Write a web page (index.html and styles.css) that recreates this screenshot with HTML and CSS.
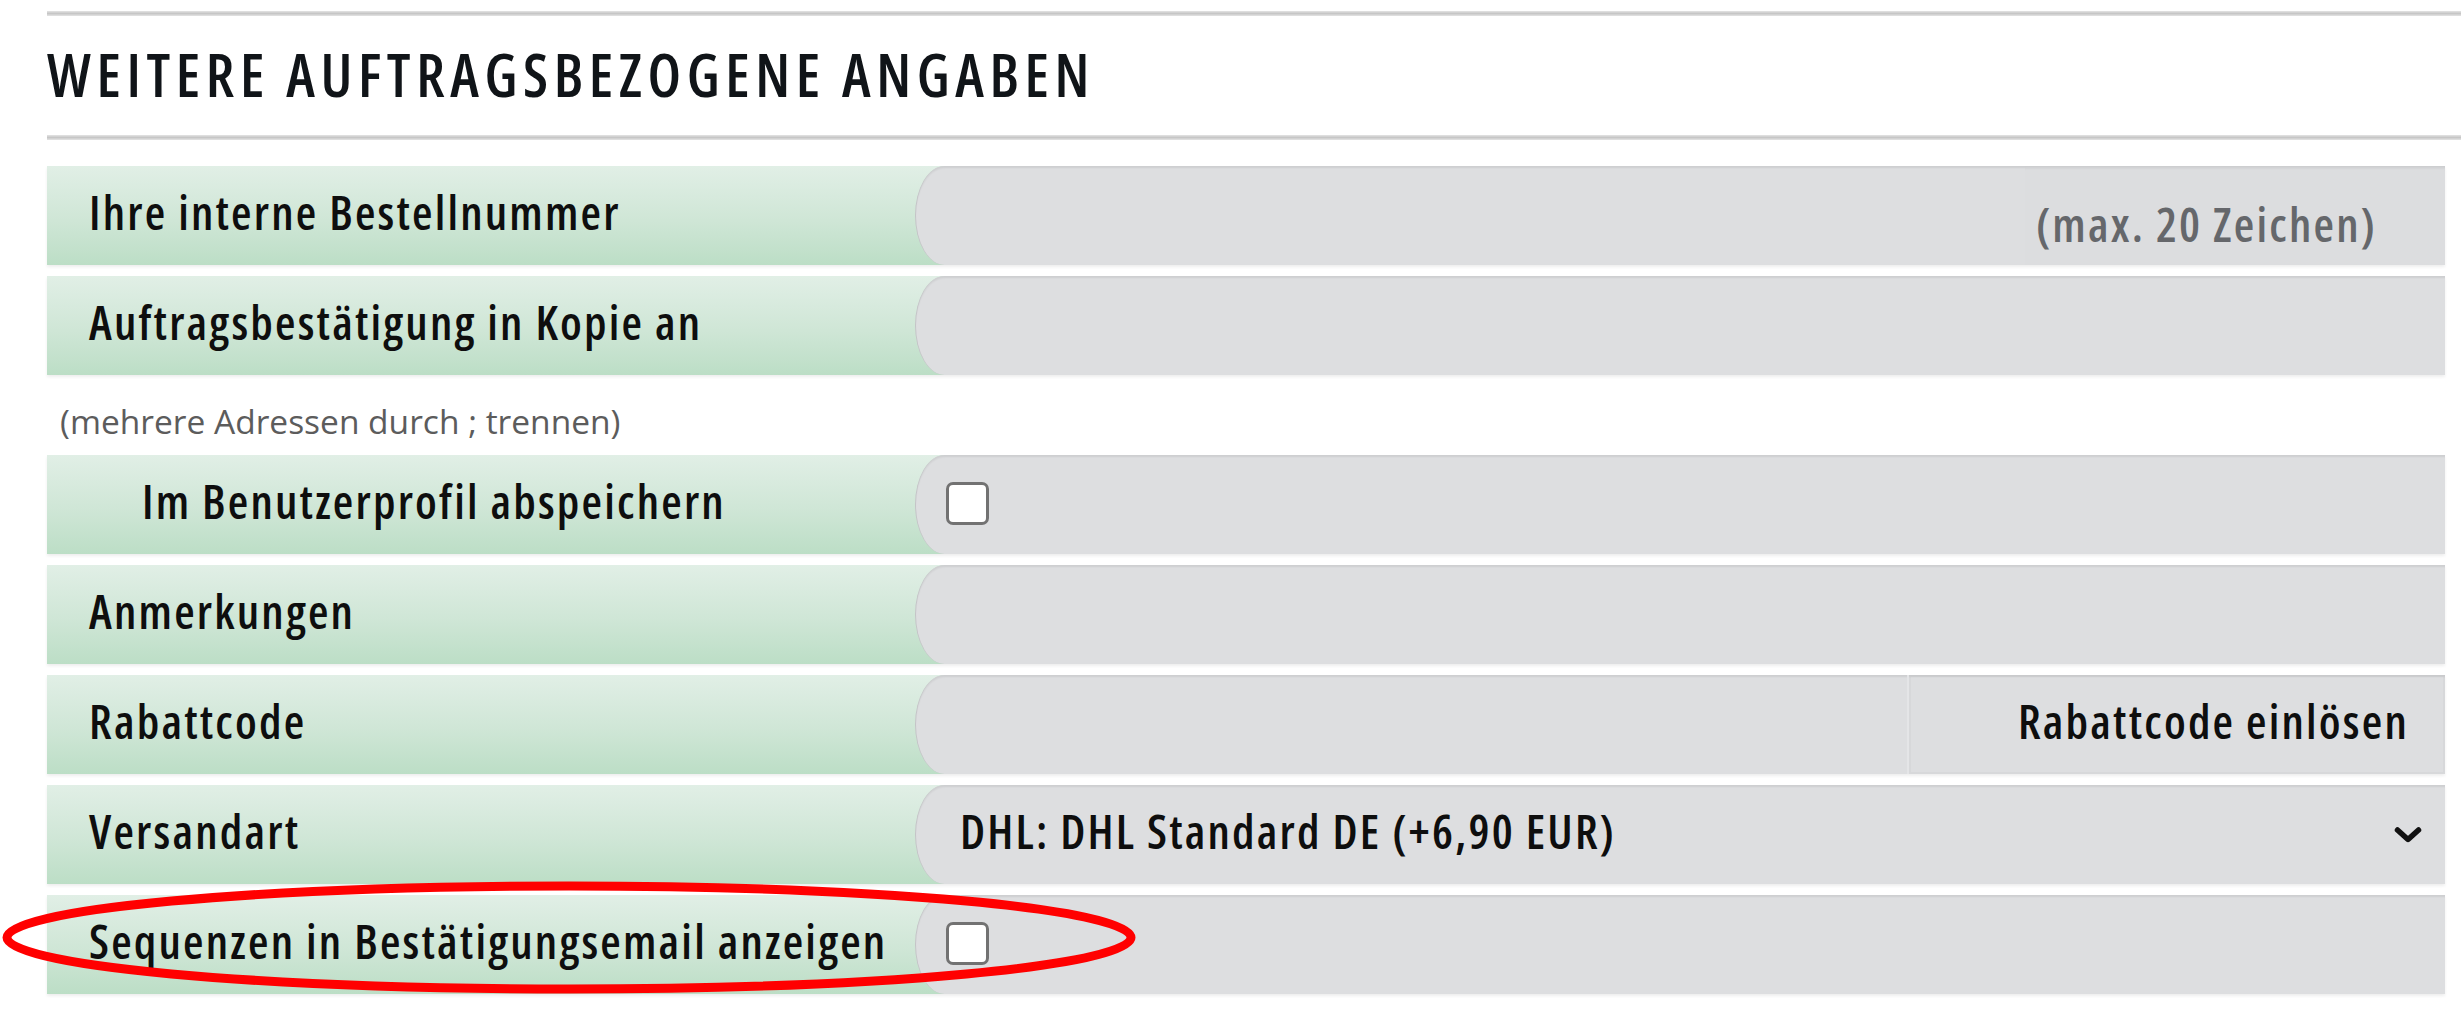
FILE: index.html
```html
<!DOCTYPE html>
<html lang="de">
<head>
<meta charset="utf-8">
<title>Weitere auftragsbezogene Angaben</title>
<link rel="stylesheet" href="styles.css">
</head>
<body>
<div class="page">
  <div class="rule"></div>
  <h2 class="heading">WEITERE AUFTRAGSBEZOGENE ANGABEN</h2>
  <div class="rule"></div>

  <div class="form">
    <div class="row">
      <div class="label">Ihre interne Bestellnummer</div>
      <div class="field">
        <span class="input"></span>
        <span class="addon">(max. 20 Zeichen)</span>
      </div>
    </div>

    <div class="row row-tight">
      <div class="label">Auftragsbestätigung in Kopie an</div>
      <div class="field"><span class="input"></span></div>
    </div>

    <div class="helper">(mehrere Adressen durch ; trennen)</div>

    <div class="row">
      <div class="label label-indent">Im Benutzerprofil abspeichern</div>
      <div class="field"><span class="check"></span></div>
    </div>

    <div class="row">
      <div class="label">Anmerkungen</div>
      <div class="field"><span class="input"></span></div>
    </div>

    <div class="row">
      <div class="label">Rabattcode</div>
      <div class="field">
        <span class="input"></span>
        <span class="button">Rabattcode einlösen</span>
      </div>
    </div>

    <div class="row">
      <div class="label">Versandart</div>
      <div class="field">
        <span class="select-text">DHL: DHL Standard DE (+6,90 EUR)</span>
        <svg class="chevron" width="30" height="20" viewBox="0 0 30 20" aria-hidden="true">
          <path d="M4.5 5 L15 14.5 L25.5 5" fill="none" stroke="#111" stroke-width="5.5" stroke-linecap="round" stroke-linejoin="round"/>
        </svg>
      </div>
    </div>

    <div class="row">
      <div class="label">Sequenzen in Bestätigungsemail anzeigen</div>
      <div class="field"><span class="check"></span></div>
    </div>
  </div>

  <svg class="highlight" width="1142" height="124" viewBox="0 0 1142 124" aria-hidden="true">
    <ellipse cx="569" cy="61.5" rx="562" ry="51.5" fill="none" stroke="#ff0000" stroke-width="9"/>
  </svg>
</div>
</body>
</html>
```

FILE: styles.css
```css
html, body {
  margin: 0;
  padding: 0;
  background: #ffffff;
}

body {
  font-family: "Open Sans", "Liberation Sans", Arial, sans-serif;
  color: #111111;
}

.page {
  position: relative;
  width: 2461px;
  height: 1011px;
  padding-top: 11px;
  box-sizing: border-box;
  overflow: hidden;
}

.rule {
  margin-left: 47px;
  height: 5px;
  background: linear-gradient(#e4e4e4, #c6c6c6 50%, #e4e4e4);
}

.heading {
  margin: 0 0 0 47px;
  padding-top: 0;
  height: 119px;
  box-sizing: border-box;
  font-stretch: 75%;
  font-weight: 600;
  font-size: 59px;
  line-height: 117px;
  letter-spacing: 5.6px;
  color: #101418;
}

.form {
  margin: 26px 16px 0 47px;
}

.row {
  display: flex;
  height: 99px;
  margin-bottom: 11px;
  box-shadow: 0 2px 3px rgba(0, 0, 0, 0.07);
}

.row-tight {
  margin-bottom: 0;
}

.label,
.addon,
.button,
.select-text {
  font-stretch: 75%;
  font-weight: 600;
  font-size: 47px;
  letter-spacing: 2.2px;
}

.label {
  flex: none;
  width: 898px;
  box-sizing: border-box;
  padding: 0 0 8px 42px;
  display: flex;
  align-items: center;
  color: #0e0e0e;
  background: linear-gradient(#e1efe6, #cfe6d6 55%, #bcdec6);
}

.label-indent {
  padding-left: 95px;
}

.field {
  flex: 1;
  margin-left: -30px;
  display: flex;
  align-items: center;
  background: #dddee0;
  border-left: 1px solid #c4c4c7;
  border-top-left-radius: 30px 50px;
  border-bottom-left-radius: 30px 50px;
  box-shadow: inset 0 3px 2px -1px rgba(0, 0, 0, 0.07);
  overflow: hidden;
}

.input {
  flex: 1;
  align-self: stretch;
}

.addon {
  flex: none;
  width: 420px;
  align-self: stretch;
  box-sizing: border-box;
  padding: 16px 0 0 11px;
  display: flex;
  align-items: center;
  color: #65676b;
  background: #dcdddf;
  box-shadow: inset 0 4px 3px -2px rgba(0, 0, 0, 0.08);
}

.button {
  flex: none;
  width: 538px;
  align-self: stretch;
  box-sizing: border-box;
  padding: 0 36px 8px 0;
  display: flex;
  align-items: center;
  justify-content: flex-end;
  color: #0e0e0e;
  border-left: 2px solid #e4e5e7;
  box-shadow: inset 0 0 0 2px rgba(0, 0, 0, 0.025);
}

.check {
  width: 43px;
  height: 43px;
  box-sizing: border-box;
  margin-left: 30px;
  margin-top: -3px;
  border: 3px solid #727272;
  border-radius: 7px;
  background: #ffffff;
}

.select-text {
  padding-left: 44px;
  margin-bottom: 8px;
  color: #0e0e0e;
}

.chevron {
  margin-left: auto;
  margin-right: 22px;
}

.helper {
  height: 80px;
  box-sizing: border-box;
  padding: 27px 0 0 13px;
  font-size: 33.5px;
  line-height: 39px;
  color: #5c5c5c;
}

.highlight {
  position: absolute;
  left: 0;
  top: 876px;
}
```
